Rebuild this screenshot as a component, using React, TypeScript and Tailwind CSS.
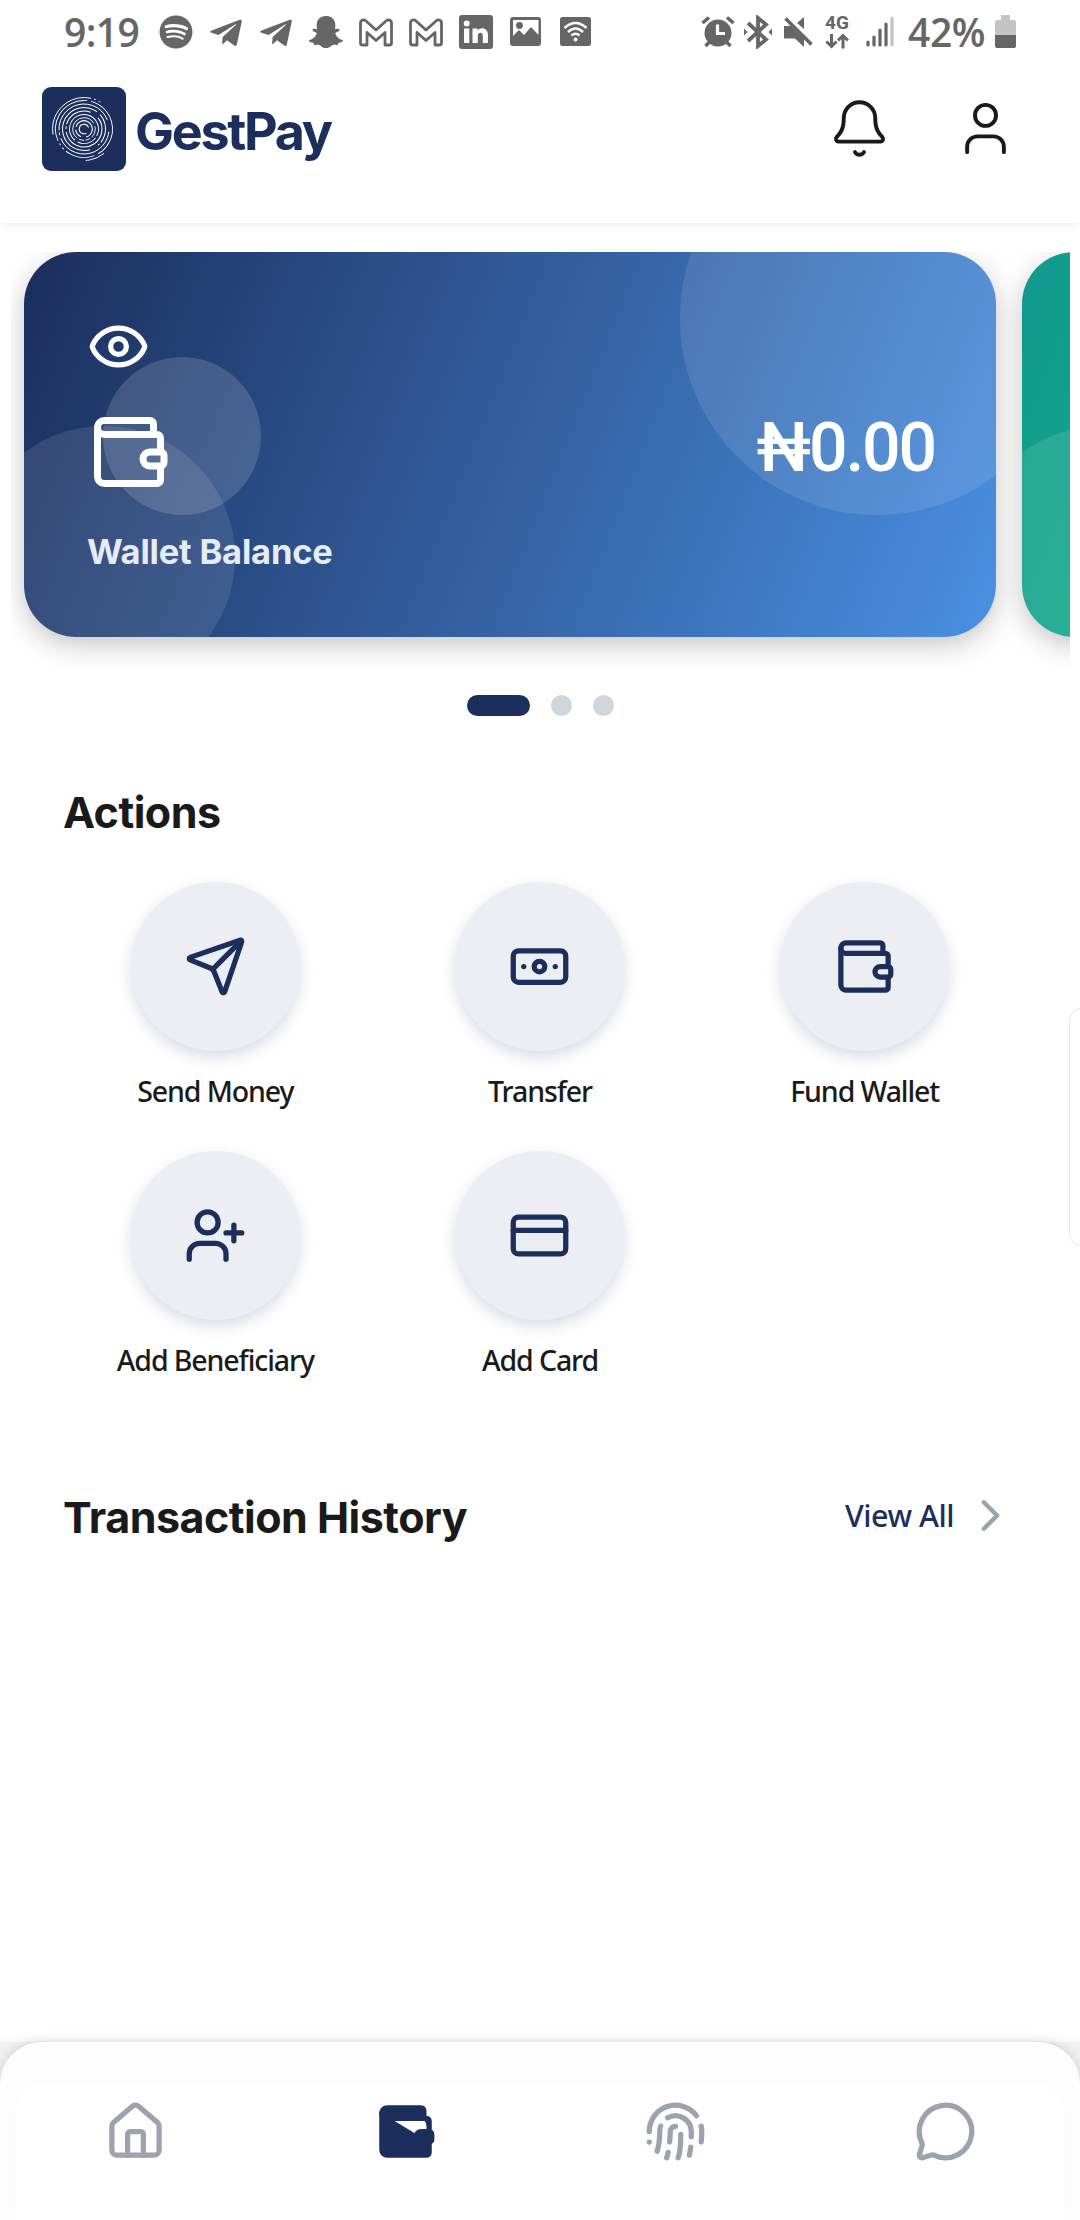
import React from "react";
import {
  Banknote,
  Bell,
  ChevronRight,
  CreditCard,
  Eye,
  House,
  MessageCircle,
  Send,
  User,
  UserPlus,
  Wallet,
  type LucideIcon,
} from "lucide-react";
import { FaSnapchatGhost, FaSpotify, FaTelegramPlane } from "react-icons/fa";

const heading = "font-['Inter',sans-serif] font-bold whitespace-nowrap";
const body = "font-['Noto_Sans',sans-serif] font-medium whitespace-nowrap";

function GmailGlyph() {
  return (
    <svg width="34" height="29" viewBox="0 0 34 29" fill="none" stroke="#666" strokeWidth="2.8" strokeLinejoin="round">
      <path d="M1.5 5V25a2 2 0 0 0 2 2H8V14.5l9 8 9-8V27h4.500a2 2 0 0 0 2-2V5c0-3-3.500-4-5.500-2L17 12 7 3C5 1 1.500 2 1.500 5Z" />
    </svg>
  );
}

function StatusBar() {
  return (
    <div className="flex h-[64px] items-start text-[#666]">
      <span className="mt-[5px] ml-[64px] w-[95px] font-['Open_Sans',sans-serif] text-[39px] leading-[54px] font-semibold tracking-[-0.6px]">9:19</span>
      <div className="flex h-[64px] items-center gap-[16px]">
        <FaSpotify className="size-[34px]" />
        <FaTelegramPlane className="mt-[2px] size-[36px] -mx-px" />
        <FaTelegramPlane className="mt-[2px] size-[36px] -mx-px" />
        <FaSnapchatGhost className="size-[34px]" />
        <GmailGlyph />
        <GmailGlyph />
        <svg width="34" height="34" viewBox="0 0 34 34">
          <rect width="34" height="34" rx="3" fill="#666" />
          <circle cx="7.700" cy="8.500" r="3" fill="#fff" />
          <path d="M5 13.500h5.300V28H5zM13.500 13.500h5v2c3-4 10.500-3 10.500 4.500v8h-5.200v-7c0-4.500-5-4-5 0v7h-5.300z" fill="#fff" />
        </svg>
        <svg width="34" height="34" viewBox="0 0 34 34">
          <path fillRule="evenodd" d="M4 2h25a3 3 0 0 1 3 3v23a3 3 0 0 1-3 3H4a3 3 0 0 1-3-3V5a3 3 0 0 1 3-3Zm0 3v16l6-6 5 5 7-8 7.500 8V5Z" fill="#666" />
          <circle cx="10.500" cy="10.500" r="3.400" fill="#666" />
        </svg>
        <svg width="34" height="34" viewBox="0 0 34 34">
          <rect x="1" y="2" width="31" height="29" rx="2.500" fill="#666" />
          <g fill="none" stroke="#fff" strokeWidth="2.500">
            <path d="M5.500 13q11-10 22 0M9 17q7.500-7 15 0M12.500 20.500q4-3.500 8 0" />
          </g>
          <circle cx="16.500" cy="24.500" r="1.900" fill="#fff" />
        </svg>
      </div>
      <div className="ml-[108px] flex items-start pt-[15px]">
        <svg width="34" height="34" viewBox="0 0 34 34" fill="none" stroke="#666">
          <circle cx="17" cy="18" r="13.500" fill="#666" stroke="none" />
          <path d="M1.500 8 8 2.500M32.500 8 26 2.500" strokeWidth="3.500" />
          <path d="m8.500 27-4 4M25.500 27l4 4" strokeWidth="3.500" />
          <path d="M16.500 9.500V18.500H24" stroke="#fff" strokeWidth="3.200" />
        </svg>
        <svg className="ml-[8px]" width="30" height="34" viewBox="0 0 30 34" fill="none" stroke="#666" strokeWidth="3.800">
          <path d="M5 8 23 24.500l-8 6.500V3l8 6.500L5 26" />
          <path d="M1 13.500v7l3.500-3.500zM29 13.500v7l-3.500-3.500z" fill="#666" stroke="none" />
        </svg>
        <svg className="ml-[10px]" width="30" height="34" viewBox="0 0 30 34" fill="#666">
          <path d="M1 11h7l13 13v8l-9-8.500H1zM21 2v12L14 8z" />
          <path d="m2.500 3.500 26 26" stroke="#666" strokeWidth="3.500" />
        </svg>
        <div className="ml-[11px] flex w-[26px] flex-col items-center">
          <span className="h-[15px] font-['Roboto',sans-serif] text-[19px] leading-[15px] font-bold">4G</span>
          <svg className="mt-[3px]" width="24" height="16" viewBox="0 0 24 16" fill="none" stroke="#666" strokeWidth="3">
            <path d="M6.500 1v12M1.500 8.500l5 5 5-5M18 15.500V3M13 7.500l5-5 5 5" />
          </svg>
        </div>
        <svg className="ml-[16px]" width="28" height="32" viewBox="0 0 28 32" fill="none" stroke="#666" strokeWidth="3.200" strokeLinecap="round">
          <path d="M2 27v3M8 22v8M14 15v15M20 9v21" />
          <path d="M26 3v27" stroke="#c4c4c4" />
        </svg>
      </div>
      <span className="mt-[5px] ml-[14px] w-[87px] font-['Open_Sans',sans-serif] text-[39px] leading-[54px] font-semibold tracking-[-0.4px]">42%</span>
      <svg className="mt-[15px]" width="21" height="33" viewBox="0 0 21 33">
        <path d="M6 0h9v5h4a2 2 0 0 1 2 2v13H0V7a2 2 0 0 1 2-2h4z" fill="#c4c4c4" />
        <path d="M0 20h21v11a2 2 0 0 1-2 2H2a2 2 0 0 1-2-2z" fill="#666" />
      </svg>
    </div>
  );
}

/* Concentric broken rings on a navy tile */
function Logo() {
  const rings: [number, string, number, number][] = [
    [4.800, "23 7", 1.100, 60],
    [8.300, "34 5 9 3", 1.100, 200],
    [11.300, "5 2 40 3 12 2", 0.9, 90],
    [14.500, "60 2 20 3", 0.9, 150],
    [18, "50 3 3 2 30 9", 1, 10],
    [21.500, "70 4 30 2 2 9", 1, 120],
    [25, "60 3 3 2 70 12", 0.9, 20],
    [28.500, "60 4 30 3 2 3 2 3", 0.9, 300],
    [31.500, "62 3 2 3 2 60 20 46", 0.9, 170],
  ];
  return (
    <svg width="84" height="84" viewBox="0 0 84 84">
      <rect width="84" height="84" rx="9" fill="#1b2e5c" />
      {rings.map(([r, dash, w, turn]) => (
        <circle key={r} cx="42" cy="42" r={r} fill="none" stroke="#fff" strokeWidth={w} strokeDasharray={dash} transform={`rotate(${turn} 42 42)`} />
      ))}
    </svg>
  );
}

function Header() {
  return (
    <header className="flex h-[159px] items-start pt-[23px] pr-[63px] pl-[42px]">
      <Logo />
      <span className={`${heading} ml-[9px] text-[52px] leading-[90px] tracking-[-2.3px] text-[#1b2e5c]`}>GestPay</span>
      <Bell className="mt-[10px] ml-auto" size={63} strokeWidth={1.5} color="#1a1a1a" />
      <User className="mt-[10px] ml-[63px]" size={63} strokeWidth={1.5} color="#1a1a1a" />
    </header>
  );
}

function Carousel() {
  return (
    <section className="mt-[29px] ml-[11px] flex h-[443px] w-[1059px] gap-[26px] overflow-hidden pl-[13px]">
      <div className="relative h-[385px] w-[972px] shrink-0 rounded-[52px] bg-[linear-gradient(111.6deg,#1b2e5c,#4a90e2)] text-white shadow-[0_8px_26px_rgba(0,0,0,0.22)]">
        <div className="absolute inset-0 overflow-hidden rounded-[52px]">
          <div className="absolute top-[-131px] left-[656px] size-[394px] rounded-full bg-white/10" />
          <div className="absolute top-[174px] left-[-52px] size-[263px] rounded-full bg-white/10" />
          <div className="absolute top-[105px] left-[79px] size-[158px] rounded-full bg-white/15" />
        </div>
        <div className="relative flex h-full flex-col pt-[63px] pr-[61px] pl-[63px]">
          <Eye size={63} />
          <div className="mt-[32px] flex h-[84px] items-center justify-between">
            <Wallet size={84} />
            <span className="mb-[8px] font-['Roboto',sans-serif] text-[68px] leading-[80px] font-medium tracking-[-2.2px]">₦0.00</span>
          </div>
          <span className={`${heading} mt-[37px] text-[34.5px] leading-[42px] tracking-[-0.2px] text-[#e6ebf6]`}>Wallet Balance</span>
        </div>
      </div>
      <div className="relative h-[385px] w-[972px] shrink-0 rounded-[52px] shadow-[0_8px_26px_rgba(0,0,0,0.22)]">
        <div className="absolute inset-0 overflow-hidden rounded-[52px] bg-[linear-gradient(111.6deg,#11998e,#15e070)]">
          <div className="absolute top-[174px] left-[-52px] size-[263px] rounded-full bg-white/10" />
        </div>
      </div>
    </section>
  );
}

function Action({ icon: Icon, label }: { icon: LucideIcon; label: string }) {
  return (
    <div className="flex h-[269px] flex-col items-center">
      <div className="flex size-[169px] items-center justify-center rounded-full bg-[#edeef3] shadow-[0_6px_14px_rgba(27,46,92,0.16)]">
        <Icon size={63} color="#1b2e5c" />
      </div>
      <span className={`${body} mt-[20px] text-[28.5px] leading-[40px] tracking-[-1.1px] text-[#1a1a1a]`}>{label}</span>
    </div>
  );
}

function FingerprintIcon() {
  return (
    <svg width="63" height="63" viewBox="0 0 24 24" fill="none" stroke="#9ca3af" strokeWidth="2" strokeLinecap="round" strokeLinejoin="round">
      <path d="M12 10a2 2 0 0 0-2 2c0 1.020-.1 2.510-.26 4" />
      <path d="M14 13.120c0 2.380 0 6.380-1 8.880" />
      <path d="M17.290 21.020c.12-.6.43-2.300.5-3.020" />
      <path d="M2 12a10 10 0 0 1 18-6" />
      <path d="M2 16h.01" />
      <path d="M21.800 16c.2-2 .131-5.354 0-6" />
      <path d="M5 19.500C5.500 18 6 15 6 12a6 6 0 0 1 .34-2" />
      <path d="M8.650 22c.21-.66.45-1.320.57-2" />
      <path d="M9 6.800a6 6 0 0 1 9 5.200v2" />
    </svg>
  );
}

function BottomNav() {
  return (
    <div className="bg-[#f0f0f0] shadow-[0_-2px_6px_rgba(0,0,0,0.03)]">
      <nav className="relative h-[178px] overflow-hidden rounded-t-[42px] bg-[#fdfdfd] shadow-[0_0_12px_rgba(0,0,0,0.14)]">
        <div className="absolute inset-x-[16px] top-[42px] bottom-0 rounded-t-[24px] bg-[#fefefe] shadow-[0_0_18px_rgba(0,0,0,0.012)]" />
        <div className="relative grid grid-cols-4 justify-items-center pt-[58px]">
          <House size={63} color="#9ca3af" />
          <Wallet size={63} color="#1b2e5c" fill="#1b2e5c" />
          <FingerprintIcon />
          <MessageCircle size={63} color="#9ca3af" />
        </div>
      </nav>
    </div>
  );
}

export default function App() {
  return (
    <div className="relative flex h-[2220px] w-[1080px] flex-col overflow-hidden bg-[#fefefe]">
      <div className="h-[223px] shrink-0 bg-white shadow-[0_1px_8px_rgba(0,0,0,0.08)]">
        <StatusBar />
        <Header />
      </div>
      <Carousel />
      <div className="flex justify-center gap-[21px]">
        <div className="h-[21px] w-[63px] rounded-full bg-[#1b2e5c]" />
        <div className="size-[21px] rounded-full bg-[#d1d5dc]" />
        <div className="size-[21px] rounded-full bg-[#d1d5dc]" />
      </div>
      <h2 className={`${heading} mt-[68px] ml-[63px] text-[43px] leading-[56px] tracking-[-0.5px] text-[#1a1a1a]`}>Actions</h2>
      <div className="mx-[53px] mt-[42px] grid grid-cols-3">
        <Action icon={Send} label="Send Money" />
        <Action icon={Banknote} label="Transfer" />
        <Action icon={Wallet} label="Fund Wallet" />
        <Action icon={UserPlus} label="Add Beneficiary" />
        <Action icon={CreditCard} label="Add Card" />
      </div>
      <div className="mt-[69px] flex h-[56px] items-center pr-[63px] pl-[63px]">
        <h2 className={`${heading} text-[43px] leading-[56px] tracking-[-0.5px] text-[#1a1a1a]`}>Transaction History</h2>
        <span className={`${body} mr-[10px] mb-[5px] ml-auto text-[30.5px] leading-[42px] tracking-[-0.5px] text-[#1b2e5c]`}>View All</span>
        <ChevronRight className="mb-[4px]" size={53} color="#9ca3af" />
      </div>
      <div className="absolute top-[1008px] right-[-14px] h-[238px] w-[25px] rounded-[14px] border border-[#e6e6e6] bg-white" />
      <div className="mt-auto">
        <BottomNav />
      </div>
    </div>
  );
}
